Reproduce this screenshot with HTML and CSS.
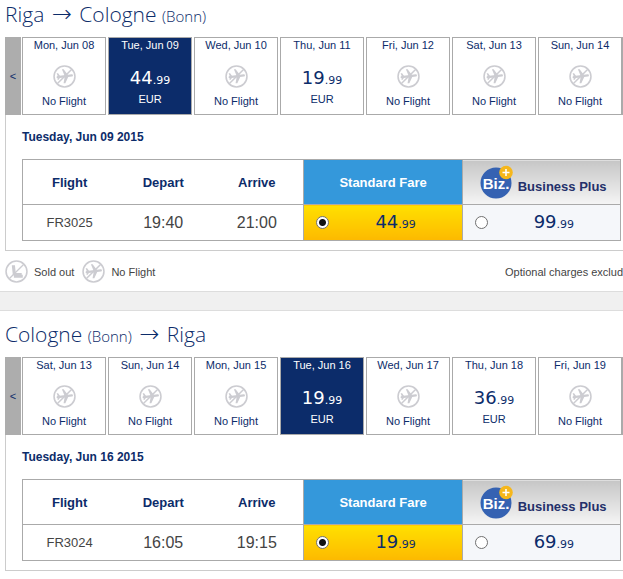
FILE: index.html
```html
<!DOCTYPE html>
<html lang="en">
<head>
    <meta charset="UTF-8">
    <meta name="viewport" content="width=device-width, initial-scale=1.0">
    <title>Select flights</title>
    <link rel="stylesheet" href="styles.css">
</head>
<body>
    <!-- shared icons -->
    <svg class="sprite" aria-hidden="true">
        <symbol id="no-flight" viewBox="0 0 22 22">
            <circle cx="11" cy="11" r="10" fill="none" stroke="currentColor" stroke-width="1.500"/>
            <path d="M4.500 11.500 18 10" stroke="currentColor" stroke-width="2.200" stroke-linecap="round"/>
            <path fill="currentColor" d="M8.500 4h1.700l4.800 6.500L11.800 17.500h-1.700l1.200-6.700z"/>
            <path fill="currentColor" d="M3.500 8h1.400l2.400 3.200-1.800 3H4.200l.6-2.700z"/>
            <path d="M18 4 4 18" stroke="currentColor" stroke-width="1.400"/>
        </symbol>
        <symbol id="sold-out" viewBox="0 0 22 22">
            <circle cx="11" cy="11" r="10" fill="none" stroke="currentColor" stroke-width="1.500"/>
            <path fill="currentColor" d="M6.500 5h3l.8 7.500h5.700v1.500H17V17H8.500v-2.500h-1z"/>
            <path d="M18 4 4 18" stroke="currentColor" stroke-width="1.200"/>
        </symbol>
        <symbol id="biz" viewBox="0 0 34 34">
            <circle cx="16" cy="18" r="15.500" fill="#3562b2"/>
            <text x="16" y="24" text-anchor="middle" class="biz-text">Biz.</text>
            <circle cx="26" cy="7.500" r="6.800" fill="#f6b71b"/>
            <path d="M22.500 7.500h7M26 4v7" stroke="#fff" stroke-width="1.600"/>
        </symbol>
    </svg>

    <section class="route">
        <h2>Riga <span class="arrow">→</span> Cologne <small>(Bonn)</small></h2>
        <div class="days">
            <button class="prev" aria-label="Earlier days">&lt;</button>
            <button class="day"><span>Mon, Jun 08</span><svg class="icon"><use href="#no-flight"/></svg><span>No Flight</span></button>
            <button class="day selected"><span>Tue, Jun 09</span><span class="price">44<small>.99</small></span><span class="currency">EUR</span></button>
            <button class="day"><span>Wed, Jun 10</span><svg class="icon"><use href="#no-flight"/></svg><span>No Flight</span></button>
            <button class="day"><span>Thu, Jun 11</span><span class="price">19<small>.99</small></span><span class="currency">EUR</span></button>
            <button class="day"><span>Fri, Jun 12</span><svg class="icon"><use href="#no-flight"/></svg><span>No Flight</span></button>
            <button class="day"><span>Sat, Jun 13</span><svg class="icon"><use href="#no-flight"/></svg><span>No Flight</span></button>
            <button class="day"><span>Sun, Jun 14</span><svg class="icon"><use href="#no-flight"/></svg><span>No Flight</span></button>
        </div>
        <div class="panel">
            <h3>Tuesday, Jun 09 2015</h3>
            <table class="fares">
                <thead>
                    <tr>
                        <th>Flight</th>
                        <th>Depart</th>
                        <th>Arrive</th>
                        <th class="standard">Standard Fare</th>
                        <th class="business"><div class="business-title"><svg class="biz"><use href="#biz"/></svg><span>Business Plus</span></div></th>
                    </tr>
                </thead>
                <tbody>
                    <tr>
                        <td>FR3025</td>
                        <td class="time">19:40</td>
                        <td class="time">21:00</td>
                        <td class="fare chosen"><label><input type="radio" name="outbound" checked><span class="price">44<small>.99</small></span></label></td>
                        <td class="fare"><label><input type="radio" name="outbound"><span class="price">99<small>.99</small></span></label></td>
                    </tr>
                </tbody>
            </table>
        </div>
        <div class="legend">
            <svg class="icon"><use href="#sold-out"/></svg><span>Sold out</span>
            <svg class="icon"><use href="#no-flight"/></svg><span>No Flight</span>
            <span class="note">Optional charges exclud</span>
        </div>
    </section>

    <div class="divider"></div>

    <section class="route">
        <h2>Cologne <small>(Bonn)</small> <span class="arrow">→</span> Riga</h2>
        <div class="days">
            <button class="prev" aria-label="Earlier days">&lt;</button>
            <button class="day"><span>Sat, Jun 13</span><svg class="icon"><use href="#no-flight"/></svg><span>No Flight</span></button>
            <button class="day"><span>Sun, Jun 14</span><svg class="icon"><use href="#no-flight"/></svg><span>No Flight</span></button>
            <button class="day"><span>Mon, Jun 15</span><svg class="icon"><use href="#no-flight"/></svg><span>No Flight</span></button>
            <button class="day selected"><span>Tue, Jun 16</span><span class="price">19<small>.99</small></span><span class="currency">EUR</span></button>
            <button class="day"><span>Wed, Jun 17</span><svg class="icon"><use href="#no-flight"/></svg><span>No Flight</span></button>
            <button class="day"><span>Thu, Jun 18</span><span class="price">36<small>.99</small></span><span class="currency">EUR</span></button>
            <button class="day"><span>Fri, Jun 19</span><svg class="icon"><use href="#no-flight"/></svg><span>No Flight</span></button>
        </div>
        <div class="panel">
            <h3>Tuesday, Jun 16 2015</h3>
            <table class="fares">
                <thead>
                    <tr>
                        <th>Flight</th>
                        <th>Depart</th>
                        <th>Arrive</th>
                        <th class="standard">Standard Fare</th>
                        <th class="business"><div class="business-title"><svg class="biz"><use href="#biz"/></svg><span>Business Plus</span></div></th>
                    </tr>
                </thead>
                <tbody>
                    <tr>
                        <td>FR3024</td>
                        <td class="time">16:05</td>
                        <td class="time">19:15</td>
                        <td class="fare chosen"><label><input type="radio" name="inbound" checked><span class="price">19<small>.99</small></span></label></td>
                        <td class="fare"><label><input type="radio" name="inbound"><span class="price">69<small>.99</small></span></label></td>
                    </tr>
                </tbody>
            </table>
        </div>
    </section>
</body>
</html>
```

FILE: styles.css
```css
body {
    margin: 0;
    background: #fff;
    color: #444;
    font-family: "Liberation Sans", Arial, sans-serif;
    font-size: 11px;
    overflow-x: hidden;
}

.sprite {
    display: none;
}

.route {
    padding-left: 5px;
}

h2 {
    margin: 0;
    padding-bottom: 7px;
    font-family: "Open Sans", sans-serif;
    font-size: 21px;
    font-weight: 300;
    line-height: 28px;
    color: #0c2c6a;
}

h2 small {
    font-size: 15px;
}

.arrow {
    margin: 0 2px;
    font-family: "DejaVu Sans", sans-serif;
    font-size: 24px;
    line-height: 0;
}

/* day picker */
.days {
    display: flex;
    gap: 2px;
    height: 78px;
    border-right: 1px solid #aaa;
}

.days button {
    margin: 0;
    padding: 0;
    font-family: inherit;
    font-size: 11px;
    color: #0c2c6a;
    cursor: pointer;
}

.days .prev {
    flex: none;
    width: 16px;
    margin-right: -1px;
    border: 0;
    background: #adadad;
}

.days .day {
    flex: 1;
    display: flex;
    flex-direction: column;
    align-items: center;
    justify-content: flex-start;
    border: 1px solid #aaa;
    background: #fff;
    line-height: 14px;
}

.day .icon {
    margin: 13px 0 6px;
}

.day .price {
    margin-top: 15px;
}

.days .selected {
    background: #0c2c6a;
    color: #fff;
}

.icon {
    display: block;
    flex: none;
    width: 23px;
    height: 23px;
    color: #ccccd1;
}

.price {
    font-family: "DejaVu Sans", Verdana, sans-serif;
    font-size: 18px;
    line-height: 22px;
}

.price small {
    font-size: 11px;
}

/* flight details */
.panel {
    padding: 14px 2px 9px 16px;
    border-left: 1px solid #ccc;
    border-bottom: 1px solid #ccc;
}

h3 {
    margin: 0 0 14px;
    font-size: 12px;
    line-height: 16px;
    color: #0c2c6a;
}

.fares {
    width: 100%;
    table-layout: fixed;
    border-collapse: collapse;
    border: 1px solid #aaa;
    font-size: 13px;
    text-align: center;
}

.fares th,
.fares td {
    padding: 0;
}

.fares th {
    height: 44px;
    border-bottom: 1px solid #aaa;
    color: #0c2c6a;
}

.fares td {
    height: 35px;
}

.fares .standard,
.fares .business {
    width: 26.3%;
}

.fares .standard {
    border-left: 1px solid #aaa;
    border-right: 1px solid #aaa;
    background: #3498db;
    color: #fff;
}

.fares .business {
    background: linear-gradient(#c6c6c6, #f5f5f5);
    color: #24306a;
}

.business-title {
    display: flex;
    align-items: center;
    gap: 4px;
    padding-left: 17px;
}

.business-title span {
    padding-top: 8px;
}

.biz {
    display: block;
    width: 34px;
    height: 34px;
}

.biz-text {
    font: bold 15px "Liberation Sans Narrow", "Arial Narrow", "Liberation Sans", sans-serif;
    fill: #fff;
}

.fares .time {
    font-size: 16px;
}

.fares .fare {
    border-left: 1px solid #aaa;
    background: #f5f7fa;
    color: #0c2c6a;
}

.fares .chosen {
    background: linear-gradient(#ffe000, #fdb900);
}

.fare label {
    display: flex;
    align-items: center;
    padding-left: 12px;
}

.fare .price {
    flex: 1;
    padding-top: 2px;
}

.fare input {
    appearance: none;
    box-sizing: border-box;
    width: 13px;
    height: 13px;
    margin: 0;
    border: 1px solid #707070;
    border-radius: 50%;
    background: #fff;
}

.fare input:checked {
    background: radial-gradient(circle, #111 3px, #fff 4px);
}

.legend {
    display: flex;
    align-items: center;
    gap: 6px;
    padding: 9px 0 8px;
    line-height: 22px;
    white-space: nowrap;
}

.legend span + .icon {
    margin-left: 2px;
}

.legend .note {
    margin-left: auto;
}

.divider {
    height: 18px;
    margin-bottom: 9px;
    border-top: 1px solid #ddd;
    border-bottom: 1px solid #ddd;
    background: #f0f0f0;
}
```
